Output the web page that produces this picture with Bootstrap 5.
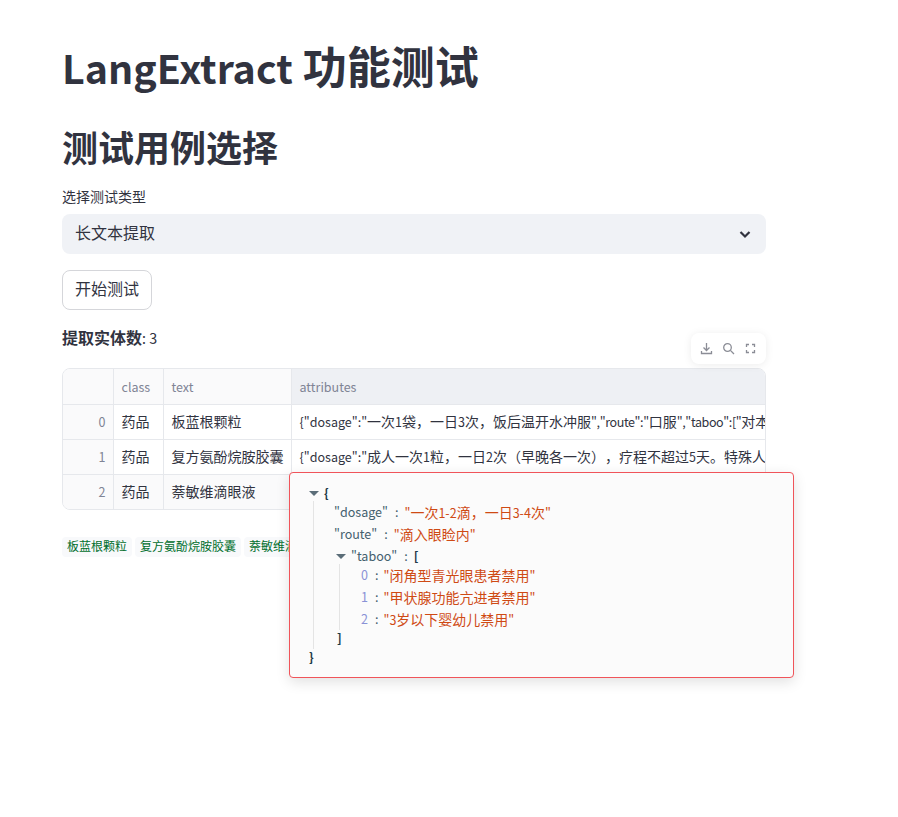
<!DOCTYPE html>
<html lang="zh">
<head>
<meta charset="utf-8">
<title>LangExtract 功能测试</title>
<link href="https://cdn.jsdelivr.net/npm/bootstrap@5.3.0/dist/css/bootstrap.min.css" rel="stylesheet">
<style>
html, body { min-height: 817px; }
body { font-family: "Noto Sans CJK SC", "Noto Sans", sans-serif; color: #31333f; background: #fff; text-spacing-trim: space-all; }
.lt { font-size: .895em; }
.lt-tight { letter-spacing: -.4px; }
.app-main { width: 704px; min-height: 780px; margin-left: 62px; padding-top: 33px; position: relative; }
.title-a { font-size: 44px; line-height: 64px; font-weight: 700; margin: 0 0 21px; color: #31333f; }
.title-b { font-size: 36px; line-height: 52px; font-weight: 700; margin: 0 0 14px; color: #31333f; }
.pick-label { font-size: 14px; line-height: 20px; margin-bottom: 8px; display: block; }
.pick-box { height: 40px; background: #f0f2f6; border-radius: 8px; padding: 0 14px 4px 13px; font-size: 16px; }
.pick-box svg { position: relative; top: 2px; }
.start-btn { height: 40px; width: 90px; margin-top: 16px; padding: 0 0 5px; font-size: 16px; color: #31333f; background: #fff; border: 1px solid #d5d6da; border-radius: 8px; display: block; }
.count-line { font-size: 16px; line-height: 24px; margin-top: 15px; }
.count-line strong { font-weight: 700; }
.grid-wrap { position: relative; margin-top: 18px; }
.tool-bar { position: absolute; right: 0; top: -35px; width: 75px; height: 31px; background: #fff; border-radius: 8px; box-shadow: 0 1px 8px rgba(0,0,0,.08); padding: 0 9px; }
.tool-bar svg { display: block; }
.grid-frame { border: 1px solid #e6e8ec; border-radius: 8px; overflow: hidden; }
.data-grid { width: 703px; table-layout: fixed; border-collapse: collapse; font-size: 14px; margin: 0; }
.data-grid th, .data-grid td { border-right: 1px solid #e6e8ec; border-bottom: 1px solid #e6e8ec; padding: 0 7px 0 8px; white-space: nowrap; overflow: hidden; font-weight: 400; color: #31333f; height: 35px; background: #fff; }
.data-grid tr:last-child td { border-bottom: 0; }
.data-grid th { color: #808495; background: #fafafb; }
.data-grid th.on { background: #eef0f4; border-right: 0; }
.data-grid td:last-child { border-right: 0; }
.data-grid td.idx { text-align: right; color: #808495; background: #fafafb; }
.data-grid tr:nth-child(3) td:not(.idx) { background: #fafafb; }
.tag-row { margin-top: 27px; gap: 3px; font-size: 12px; }
.tag-item { height: 20px; line-height: 18px; padding: 0 5px; background: #f8f9fb; color: #006e2c; border-radius: 4px; white-space: nowrap; flex: none; }
.pop-json { position: absolute; z-index: 5; left: 227px; top: 104px; width: 505px; height: 206px; background: #fbfbfb; border: 1px solid #f0545a; border-radius: 4px; box-shadow: 0 4px 14px rgba(0,0,0,.12); padding: 9px 0 0 19px; font-size: 14px; line-height: 22px; color: #31333f; }
.jr { height: 22px; white-space: nowrap; display: flex; align-items: center; }
.tri { width: 0; height: 0; border-left: 5px solid transparent; border-right: 5px solid transparent; border-top: 5px solid #5b6d78; margin-right: 5px; flex: none; }
.jb1 .tri { margin-left: 2px; }
.jk { color: #44606e; }
.js { color: #cf4a14; }
.ji { color: #8a92d6; }
.jp { color: #1f3a48; font-weight: 700; }
.jc { color: #44606e; margin: 0 6px 0 7px; }
.jb1 { margin: -3px 0 -3px 4px; padding-left: 20px; border-left: 1px solid #e4e4e4; }
.jb2 { margin: -3px 0 -3px 5px; padding-left: 21px; border-left: 1px solid #e4e4e4; }
.jb2 .jc { margin: 0 5px 0 7px; }
.jb1 > .jr > .jp:first-child { margin-left: 3px; }
</style>
</head>
<body>
<main class="app-main">
  <h1 class="title-a"><span class="lt">LangExtract</span> 功能测试</h1>
  <h2 class="title-b">测试用例选择</h2>
  <label class="pick-label">选择测试类型</label>
  <div class="pick-box d-flex align-items-center justify-content-between">
    <span>长文本提取</span>
    <svg width="14" height="14" viewBox="0 0 14 14" fill="none" stroke="#31333f" stroke-width="2.2"><path d="M2.5 5l4.5 4.5L11.5 5"/></svg>
  </div>
  <button type="button" class="btn start-btn">开始测试</button>
  <div class="count-line"><strong>提取实体数</strong><span class="lt">: 3</span></div>
  <div class="grid-wrap">
    <div class="tool-bar d-flex align-items-center justify-content-between">
      <svg width="13" height="13" viewBox="0 0 13 13" fill="none" stroke="#8b8d96" stroke-width="1.3"><path d="M6.5 1v7M3.5 5.5l3 3 3-3M1.5 9v2.5h10V9"/></svg>
      <svg width="13" height="13" viewBox="0 0 13 13" fill="none" stroke="#8b8d96" stroke-width="1.3"><circle cx="5.5" cy="5.5" r="3.8"/><path d="M8.4 8.4l3.6 3.6"/></svg>
      <svg width="13" height="13" viewBox="0 0 13 13" fill="none" stroke="#8b8d96" stroke-width="1.3"><path d="M2.5 5V2.5H5M8 2.5h2.5V5M10.5 8v2.5H8M5 10.5H2.5V8"/></svg>
    </div>
    <div class="grid-frame">
      <table class="data-grid">
        <colgroup><col style="width:50px"><col style="width:50px"><col style="width:128px"><col></colgroup>
        <thead><tr><th></th><th><span class="lt">class</span></th><th><span class="lt">text</span></th><th class="on"><span class="lt">attributes</span></th></tr></thead>
        <tbody>
          <tr><td class="idx"><span class="lt">0</span></td><td>药品</td><td>板蓝根颗粒</td><td><span class="lt">{"dosage":"</span>一次<span class="lt">1</span>袋，一日<span class="lt">3</span>次，饭后温开水冲服<span class="lt lt-tight">","route":"</span>口服<span class="lt lt-tight">","taboo":["</span>对本品过敏者禁用<span class="lt">"]}</span></td></tr>
          <tr><td class="idx"><span class="lt">1</span></td><td>药品</td><td>复方氨酚烷胺胶囊</td><td><span class="lt">{"dosage":"</span>成人一次<span class="lt">1</span>粒，一日<span class="lt">2</span>次（早晚各一次），疗程不超过<span class="lt">5</span>天。特殊人群遵医嘱<span class="lt">"}</span></td></tr>
          <tr><td class="idx"><span class="lt">2</span></td><td>药品</td><td>萘敏维滴眼液</td><td><span class="lt">{"dosage":"</span>一次<span class="lt">1-2</span>滴，一日<span class="lt">3-4</span>次<span class="lt">"}</span></td></tr>
        </tbody>
      </table>
    </div>
    <div class="tag-row d-flex">
      <span class="tag-item">板蓝根颗粒</span>
      <span class="tag-item">复方氨酚烷胺胶囊</span>
      <span class="tag-item">萘敏维滴眼液</span>
    </div>
    <div class="pop-json">
      <div class="jr"><span class="tri"></span><span class="jp lt">{</span></div>
      <div class="jb1">
        <div class="jr"><span class="jk lt">"dosage"</span><span class="jc lt">:</span><span class="js"><span class="lt">"</span>一次<span class="lt">1-2</span>滴，一日<span class="lt">3-4</span>次<span class="lt">"</span></span></div>
        <div class="jr"><span class="jk lt">"route"</span><span class="jc lt">:</span><span class="js"><span class="lt">"</span>滴入眼睑内<span class="lt">"</span></span></div>
        <div class="jr"><span class="tri"></span><span class="jk lt">"taboo"</span><span class="jc lt">:</span><span class="jp lt">[</span></div>
        <div class="jb2">
          <div class="jr"><span class="ji lt">0</span><span class="jc lt">:</span><span class="js"><span class="lt">"</span>闭角型青光眼患者禁用<span class="lt">"</span></span></div>
          <div class="jr"><span class="ji lt">1</span><span class="jc lt">:</span><span class="js"><span class="lt">"</span>甲状腺功能亢进者禁用<span class="lt">"</span></span></div>
          <div class="jr"><span class="ji lt">2</span><span class="jc lt">:</span><span class="js"><span class="lt">"3</span>岁以下婴幼儿禁用<span class="lt">"</span></span></div>
        </div>
        <div class="jr"><span class="jp lt">]</span></div>
      </div>
      <div class="jr"><span class="jp lt">}</span></div>
    </div>
  </div>
</main>
<script src="https://cdn.jsdelivr.net/npm/bootstrap@5.3.0/dist/js/bootstrap.bundle.min.js"></script>
</body>
</html>
